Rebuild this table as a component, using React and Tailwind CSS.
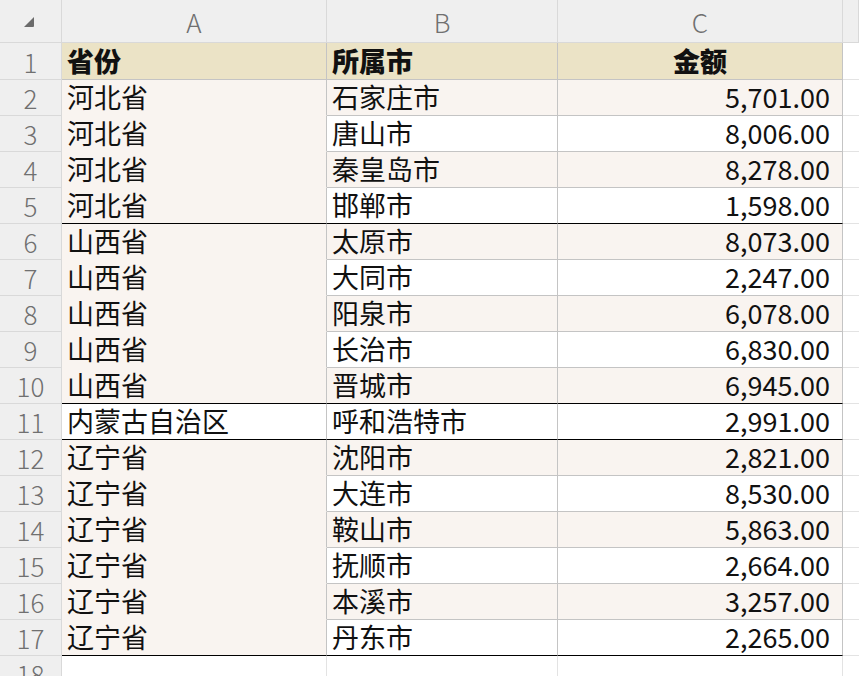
import React from "react";

const rows = [
  ["河北省", "石家庄市", "5,701.00"],
  ["河北省", "唐山市", "8,006.00"],
  ["河北省", "秦皇岛市", "8,278.00"],
  ["河北省", "邯郸市", "1,598.00"],
  ["山西省", "太原市", "8,073.00"],
  ["山西省", "大同市", "2,247.00"],
  ["山西省", "阳泉市", "6,078.00"],
  ["山西省", "长治市", "6,830.00"],
  ["山西省", "晋城市", "6,945.00"],
  ["内蒙古自治区", "呼和浩特市", "2,991.00"],
  ["辽宁省", "沈阳市", "2,821.00"],
  ["辽宁省", "大连市", "8,530.00"],
  ["辽宁省", "鞍山市", "5,863.00"],
  ["辽宁省", "抚顺市", "2,664.00"],
  ["辽宁省", "本溪市", "3,257.00"],
  ["辽宁省", "丹东市", "2,265.00"],
];

// sheet rows that close a province group
const groupEnds = [5, 10, 11, 17];

function RowHead({ children, h }) {
  return (
    <div
      className={`${h} flex items-center justify-center bg-[#efefef] border-r border-b border-[#d9d9d9] text-[#707070] text-[26px] font-light`}
    >
      {children}
    </div>
  );
}

export default function App() {
  return (
    <div
      className="w-[859px] h-[676px] overflow-hidden bg-white text-[#111]"
      style={{ fontFamily: '"Noto Sans CJK SC", "Noto Sans", sans-serif' }}
    >
      <div className="grid grid-cols-[62px_265px_231px_285px_1fr]">
        {/* column headers */}
        <div className="h-[43px] bg-[#efefef] border-r border-b border-[#d9d9d9] flex items-center justify-center">
          <svg width="14" height="14" viewBox="0 0 14 14" className="ml-[-3px] mt-[2px]">
            <path d="M12 2 L12 11 Q12 12 11 12 L2 12 Z" fill="#6b6b6b" />
          </svg>
        </div>
        {["A", "B", "C", ""].map((l, i) => (
          <div
            key={i}
            className="h-[43px] bg-[#efefef] border-r border-b border-[#d9d9d9] flex items-center justify-center text-[26px] text-[#707070] font-light"
          >
            {l}
          </div>
        ))}

        {/* row 1 */}
        <RowHead h="h-[37px]">1</RowHead>
        <div className="h-[37px] bg-[#ebe3c6] border-r border-b border-[#c4c4c4] flex items-center pl-[5px] text-[27px] font-black">
          省份
        </div>
        <div className="h-[37px] bg-[#ebe3c6] border-r border-b border-[#c4c4c4] flex items-center pl-[5px] text-[27px] font-black">
          所属市
        </div>
        <div className="h-[37px] bg-[#ebe3c6] border-r border-b border-[#c4c4c4] flex items-center justify-center text-[27px] font-black">
          金额
        </div>
        <div className="h-[37px] border-b border-[#e3e3e3]" />

        {rows.map((r, i) => {
          const n = i + 2;
          const end = groupEnds.includes(n);
          const band = n % 2 === 0 ? "bg-[#f9f4f0]" : "bg-white";
          const aFill = n === 11 ? "bg-white" : "bg-[#f9f4f0]";
          const bottom = end ? "border-b border-b-black" : "border-b border-b-[#c4c4c4]";
          const aBottom = end ? "border-b border-b-black" : "border-b border-b-[#f9f4f0]";
          return (
            <React.Fragment key={n}>
              <RowHead h="h-[36px]">{n}</RowHead>
              <div
                className={`h-[36px] ${aFill} border-r border-r-[#c4c4c4] ${aBottom} flex items-center pl-[5px] text-[27px] whitespace-nowrap`}
              >
                {r[0]}
              </div>
              <div
                className={`h-[36px] ${band} border-r border-r-[#c4c4c4] ${bottom} flex items-center pl-[5px] text-[27px] whitespace-nowrap`}
              >
                {r[1]}
              </div>
              <div
                className={`h-[36px] ${band} border-r border-r-[#c4c4c4] ${bottom} flex items-center justify-end pr-[12px] text-[27px]`}
              >
                {r[2]}
              </div>
              <div className="h-[36px] border-b border-[#e3e3e3]" />
            </React.Fragment>
          );
        })}

        {/* row 18 */}
        <RowHead h="h-[36px]">18</RowHead>
        <div className="h-[36px] border-r border-b border-[#e3e3e3]" />
        <div className="h-[36px] border-r border-b border-[#e3e3e3]" />
        <div className="h-[36px] border-r border-b border-[#e3e3e3]" />
        <div className="h-[36px] border-b border-[#e3e3e3]" />
      </div>
    </div>
  );
}
